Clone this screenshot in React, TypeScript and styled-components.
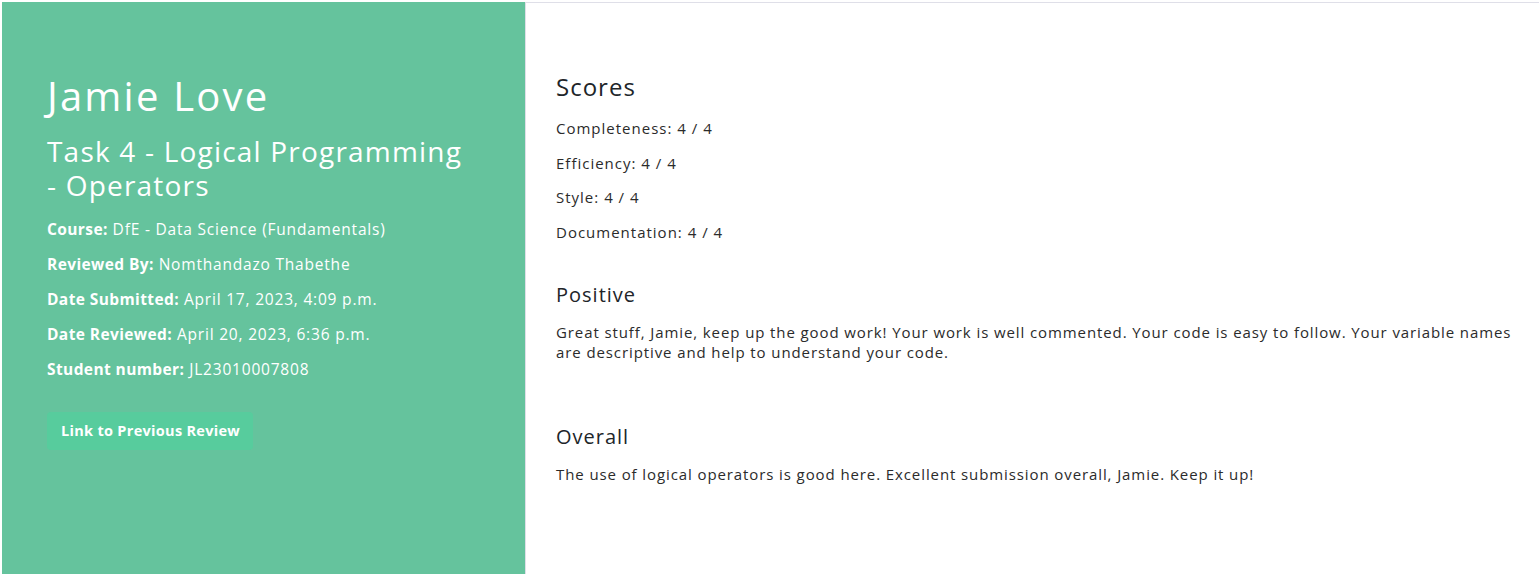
import React from "react";
import styled, { createGlobalStyle } from "styled-components";

const Global = createGlobalStyle`
  html, body { margin: 0; padding: 0; background: #fff; }
  body { font-family: "Open Sans", "Liberation Sans", sans-serif; color: #212529; }
  * { box-sizing: border-box; }
`;

const Page = styled.div`
  display: flex;
  height: 574px;
  padding: 2px 0 0 2px;
`;

const Sidebar = styled.aside`
  width: 523px;
  flex-shrink: 0;
  background: #65c39d;
  color: #fff;
  padding: 70px 45px 0 45px;
  display: flex;
  flex-direction: column;
`;

const Name = styled.h1`
  margin: 0 0 14px 0;
  font-size: 40px;
  font-weight: 400;
  line-height: 1.2;
  letter-spacing: 2.2px;
`;

const Task = styled.h3`
  margin: 0 0 10px 0;
  font-size: 28px;
  font-weight: 400;
  line-height: 34px;
  letter-spacing: 1.2px;
`;

const Meta = styled.p`
  margin: 0;
  font-size: 15.5px;
  line-height: 35px;
  letter-spacing: 0.8px;
  & b { font-weight: 700; letter-spacing: 0.4px; }
`;

const LinkButton = styled.a`
  align-self: flex-start;
  margin-top: 25px;
  background: #57cc9d;
  color: #fff;
  font-weight: 700;
  font-size: 14.5px;
  line-height: 20px;
  letter-spacing: 0.3px;
  padding: 9px 13px 9px 14px;
  border-radius: 4px;
  text-decoration: none;
`;

const Main = styled.main`
  flex: 1;
  border-top: 1px solid #dfdfe8;
  border-left: 1px solid #dfdfe8;
  padding: 70px 16px 0 30px;
  display: flex;
  flex-direction: column;
`;

const SectionTitle = styled.h4<{ $size?: number; $gap?: number; $after?: number }>`
  margin: ${(p) => p.$gap ?? 0}px 0 ${(p) => p.$after ?? 15}px 0;
  font-size: ${(p) => p.$size ?? 20}px;
  font-weight: 500;
  line-height: 1.2;
  letter-spacing: 1px;
  color: #212529;
`;

const ScoreLine = styled.p`
  margin: 0;
  font-size: 15px;
  line-height: 34.7px;
  letter-spacing: 1px;
  color: #2b2b2b;
`;

const Paragraph = styled.p`
  margin: 0;
  font-size: 15px;
  line-height: 20px;
  letter-spacing: 0.9px;
  color: #2b2b2b;
`;

const scores = [
  ["Completeness", "4 / 4"],
  ["Efficiency", "4 / 4"],
  ["Style", "4 / 4"],
  ["Documentation", "4 / 4"],
];

export default function App() {
  return (
    <>
      <Global />
      <Page>
        <Sidebar>
          <Name>Jamie Love</Name>
          <Task>Task 4 - Logical Programming - Operators</Task>
          <Meta><b>Course:</b> DfE - Data Science (Fundamentals)</Meta>
          <Meta><b>Reviewed By:</b> Nomthandazo Thabethe</Meta>
          <Meta><b>Date Submitted:</b> April 17, 2023, 4:09 p.m.</Meta>
          <Meta><b>Date Reviewed:</b> April 20, 2023, 6:36 p.m.</Meta>
          <Meta><b>Student number:</b> JL23010007808</Meta>
          <LinkButton href="#">Link to Previous Review</LinkButton>
        </Sidebar>
        <Main>
          <SectionTitle $size={24} $after={9}>Scores</SectionTitle>
          {scores.map(([k, v]) => (
            <ScoreLine key={k}>{k}: {v}</ScoreLine>
          ))}
          <SectionTitle $gap={33}>Positive</SectionTitle>
          <Paragraph>
            Great stuff, Jamie, keep up the good work! Your work is well commented. Your code is easy to follow. Your variable names are descriptive and help to understand your code.
          </Paragraph>
          <SectionTitle $gap={63}>Overall</SectionTitle>
          <Paragraph>
            The use of logical operators is good here. Excellent submission overall, Jamie. Keep it up!
          </Paragraph>
        </Main>
      </Page>
    </>
  );
}
